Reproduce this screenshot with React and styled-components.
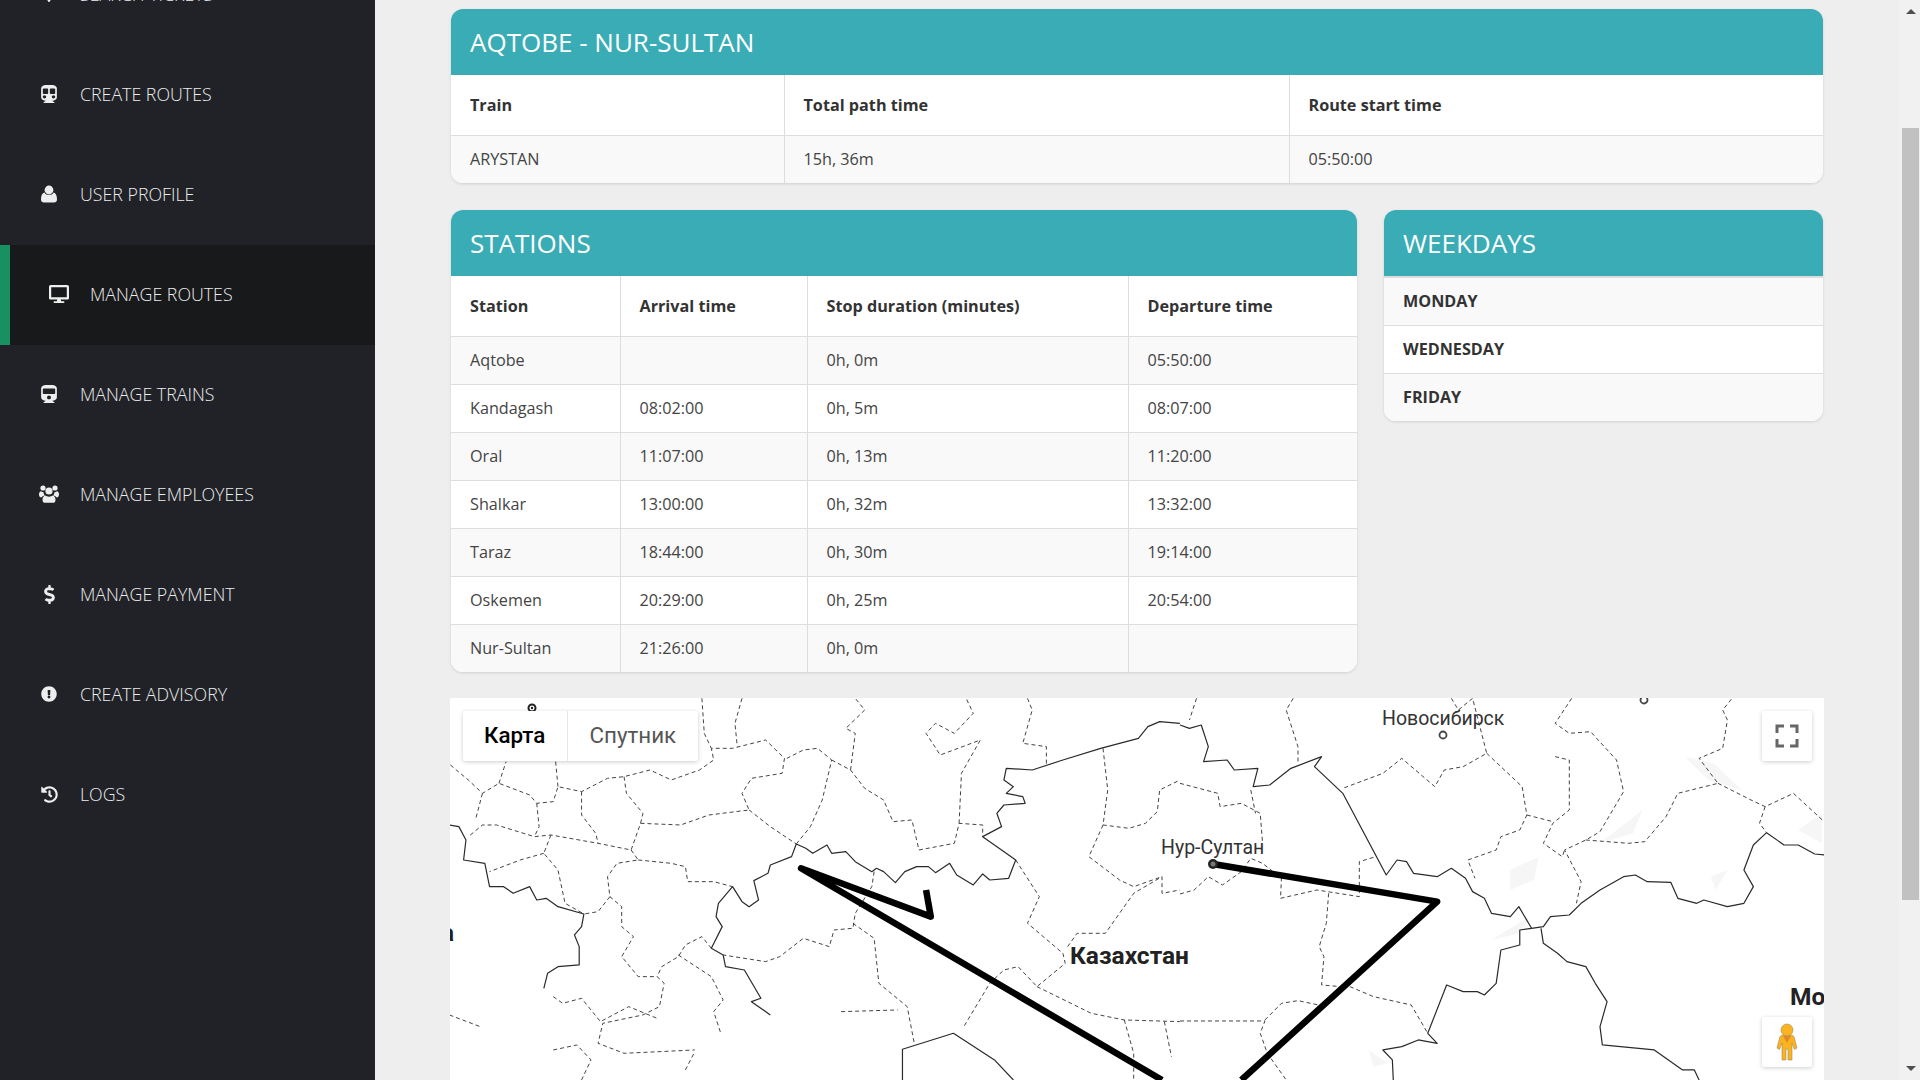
import styled, { createGlobalStyle } from 'styled-components';
import { FaMapMarkerAlt, FaSubway, FaDesktop, FaTrain, FaDollarSign, FaExclamationCircle, FaHistory } from 'react-icons/fa';

const GlobalStyle = createGlobalStyle`
    html, body {
        margin: 0;
        height: 100%;
        overflow: hidden;
    }
    body {
        font-family: "Open Sans", "Liberation Sans", sans-serif;
        background: #eeeeee;
    }
`;

// silhouettes drawn by hand, the packaged ones are too different
const UserIcon = () => (
    <svg width="16" height="18" viewBox="0 0 16 18" fill="currentColor">
        <circle cx="8" cy="5" r="4.4" />
        <path d="M3.4 7.6C4.6 9.4 6 10 8 10s3.4-.6 4.6-2.4C14.8 8.3 16 10.6 16 14.4c0 2-1.2 3-3 3H3c-1.8 0-3-1-3-3 0-3.8 1.200-6.100 3.400-6.800z" />
    </svg>
);

const UsersIcon = () => (
    <svg width="20" height="18" viewBox="0 0 20 18" fill="currentColor">
        <circle cx="4" cy="3" r="2.600" />
        <circle cx="16" cy="3" r="2.600" />
        <circle cx="10" cy="6" r="3.600" />
        <path d="M0 9.500C0 7.600.8 6.600 2 6.300c.8.700 1.600 1 2.600 1 0 1.200.5 2.300 1.300 3.100C4 10.600 2.800 11.600 2.300 12.500 1 12.500 0 11.500 0 9.500zM20 9.500c0-1.900-.8-2.900-2-3.200-.8.700-1.600 1-2.600 1 0 1.200-.5 2.300-1.300 3.100 1.900.2 3.100 1.200 3.600 2.100 1.300 0 2.300-1 2.300-3z" />
        <path d="M6.200 10.600C7.200 11.300 8.500 11.700 10 11.700s2.800-.4 3.800-1.100c1.700.4 2.700 2 2.700 4.300 0 1.900-1.100 2.900-2.700 2.900H6.200c-1.600 0-2.700-1-2.700-2.900 0-2.300 1-3.900 2.700-4.300z" />
    </svg>
);

const menu = [
    { label: 'SEARCH TICKETS', icon: <FaMapMarkerAlt size={16} /> },
    { label: 'CREATE ROUTES', icon: <FaSubway size={18} /> },
    { label: 'USER PROFILE', icon: <UserIcon /> },
    { label: 'MANAGE ROUTES', icon: <FaDesktop size={20} />, active: true },
    { label: 'MANAGE TRAINS', icon: <FaTrain size={18} /> },
    { label: 'MANAGE EMPLOYEES', icon: <UsersIcon /> },
    { label: 'MANAGE PAYMENT', icon: <FaDollarSign size={19} /> },
    { label: 'CREATE ADVISORY', icon: <FaExclamationCircle size={16} /> },
    { label: 'LOGS', icon: <FaHistory size={17} /> },
];

const stations = [
    ['Aqtobe', '', '0h, 0m', '05:50:00'],
    ['Kandagash', '08:02:00', '0h, 5m', '08:07:00'],
    ['Oral', '11:07:00', '0h, 13m', '11:20:00'],
    ['Shalkar', '13:00:00', '0h, 32m', '13:32:00'],
    ['Taraz', '18:44:00', '0h, 30m', '19:14:00'],
    ['Oskemen', '20:29:00', '0h, 25m', '20:54:00'],
    ['Nur-Sultan', '21:26:00', '0h, 0m', ''],
];

const weekdays = ['MONDAY', 'WEDNESDAY', 'FRIDAY'];

// map lines, in the coordinates of the two traced halves of the map
const leftSolid = [
    '20,405 40,410 55,450 50,510 95,520 105,590 135,590 155,610 190,590 205,630 225,625 250,650 305,672 300,710 285,735 295,770 295,825 250,830 228,850 220,895',
    '755,462 745,500 700,525 695,550 665,572 675,630 655,650 640,635 620,590 590,640 585,680 598,710 575,775 600,795 605,830 645,840 680,925 660,935 700,975',
    '755,462 775,475 790,490 820,465 830,490 860,485 880,515 915,545 925,535 940,545 965,578 985,545 1010,530 1035,530 1050,548 1080,520 1095,555 1130,585 1150,552 1165,570 1205,565 1220,510 1190,480 1150,440 1190,410 1180,370 1195,345 1240,340 1235,320 1200,310 1215,290 1195,270 1200,235 1255,240 1320,210 1400,175 1480,145 1500,110 1525,95 1568,100',
    '980,1170 980,1078 1088,1030 1175,1110 1215,1170',
];

const rightSolid = [
    '0,105 20,115 45,105 60,170 50,215 100,210 115,240 165,235 155,290 190,285 235,235 300,200 285,230 345,310 437,555 460,510 480,515 495,550 545,560 575,535 605,565 620,605 645,625 660,670 700,680 718,650 745,715 770,710 785,680 825,675 850,640 890,600 940,560 965,555 990,575 1040,577 1055,625 1095,640 1110,630 1160,650 1195,640 1215,590 1195,540 1215,465 1243,428 1280,465 1310,465 1345,492 1365,495',
    '745,715 720,720 720,765 680,780 670,880 645,915 630,905 600,905 565,885 525,1030 545,1060 505,1050 470,1070 430,1080 450,1110 452,1170',
    '765,715 770,760 800,790 820,815 860,830 880,880 905,935 890,1010 895,1065 1005,1080 1065,1140 1090,1140 1100,1170',
];

const leftDashed = [
    '22,225 60,270 90,310 125,280 190,315 205,340 240,335 250,290 300,305 355,265 390,260 445,240 490,270 550,240 580,210 575,175 620,175 690,150 730,205 725,250 660,265 640,310 655,360 570,375 510,405 425,400 405,480 335,460 235,435 200,440 120,405 90,405 60,440',
    '90,310 75,390',
    '125,280 140,215',
    '245,215 250,290',
    '300,305 300,375 330,430 335,460',
    '205,340 210,410 200,440',
    '390,260 395,310 430,370 425,400',
    '405,480 420,510 375,520 355,560 360,620 385,650 385,710 410,740 385,800 420,860 460,860 475,880 465,950 430,975 345,1000 335,1060 390,1090 540,1080',
    '420,510 490,520 520,530 525,575 580,575 620,590',
    '235,435 220,490 250,540 265,640 305,672',
    '220,490 170,510 105,545',
    '360,620 335,665 305,672',
    '655,360 700,410 755,462',
    '755,462 785,410 810,330 830,210 800,175 770,180 735,205',
    '830,210 870,240 900,295 940,330 960,395 1000,390 1015,480 1090,460 1100,400 1150,405 1150,440',
    '870,240 880,130 860,115 900,60 880,25',
    '1100,400 1105,250 1145,150 1060,195 1030,130 1050,100 1090,130 1130,70 1115,25',
    '1245,25 1255,60 1235,160 1285,170 1285,230',
    '640,25 625,100 630,170',
    '555,25 560,130 575,175',
    '920,545 915,590 880,670 875,715 835,720 825,770 770,745 720,800 690,815 600,795',
    '875,700 920,745 930,880 990,950 1005,1060',
    '850,965 970,960',
    '575,775 555,740 520,765 505,800 470,830 460,860',
    '505,795 575,860 600,930 580,965 595,1030',
    '1220,510 1270,620 1245,700 1320,790 1325,820 1265,890 1225,830 1195,840 1165,880 1110,1010',
    '1265,890 1380,970 1450,990 1568,995',
    '1330,770 1350,730 1410,730 1470,610 1530,560 1530,610 1568,600',
    '1405,175 1415,300 1405,405 1460,415 1495,400 1520,365 1525,300 1568,270',
    '1405,405 1375,500 1440,570 1470,590 1530,560',
    '240,920 260,940 300,925 340,995 400,950 460,985',
    '20,975 85,1010',
    '240,1080 290,1065 320,1110 300,1170',
    '520,1140 540,1085',
    '1450,990 1470,1090 1470,1170',
    '1535,995 1550,1100',
];

const rightDashed = [
    '35,25 20,90',
    '240,25 225,60 250,170 250,215',
    '0,280 80,310 85,350 130,340 170,370 175,460',
    '150,300 160,370',
    '575,25 590,60 620,25 650,190 600,230 560,240 540,290 470,205 430,250 345,295',
    '650,190 725,290 735,375 720,420 680,440 670,480 610,510 625,565',
    '830,25 795,100 825,130 870,125 925,210 940,305 890,425 860,450 815,480 850,575 840,640',
    '795,200 825,210 825,360 790,400 770,460 810,500 815,480',
    '735,375 790,395',
    '860,450 950,460 985,455 1030,380 1055,310 1140,280 1100,205 1150,175 1160,90 1150,60 1170,25',
    '1140,280 1210,330 1240,350 1300,310 1365,395',
    '1240,350 1228,400 1243,428',
    '0,612 30,600 60,560 90,585 130,545 150,505 175,520 215,565 213,625 290,600 380,620 380,515 415,500',
    '315,610 310,700 295,770 305,800 300,885 340,890',
    '360,890 410,920 490,945 525,1030',
    '0,993 180,993 170,1030 185,1090 225,1170',
    '180,990 215,940 250,932 310,950',
];

const rightTerrain = [
    '700,540 760,500 750,570 700,600',
    '890,460 980,360 960,430',
    '1070,200 1130,220 1190,300 1120,270',
    '660,750 740,680 720,730',
    '1310,420 1360,370 1360,460',
    '1125,560 1160,540 1135,600',
    '400,1080 440,1120 410,1130',
];

export default function App() {
    return (
        <Page>
            <GlobalStyle />
            <Sidebar>
                <Nav>
                    {menu.map((item) => (
                        <NavItem key={item.label} $active={item.active}>
                            <NavIcon>{item.icon}</NavIcon>
                            {item.label}
                        </NavItem>
                    ))}
                </Nav>
            </Sidebar>

            <Main>
                <Card>
                    <CardTitle>AQTOBE - NUR-SULTAN</CardTitle>
                    <Table>
                        <colgroup>
                            <col width="333" />
                            <col width="505" />
                            <col />
                        </colgroup>
                        <thead>
                            <tr>
                                <Th>Train</Th>
                                <Th>Total path time</Th>
                                <Th>Route start time</Th>
                            </tr>
                        </thead>
                        <tbody>
                            <Row>
                                <Td>ARYSTAN</Td>
                                <Td>15h, 36m</Td>
                                <Td>05:50:00</Td>
                            </Row>
                        </tbody>
                    </Table>
                </Card>

                <Columns>
                    <StationsCard>
                        <CardTitle>STATIONS</CardTitle>
                        <Table>
                            <colgroup>
                                <col width="169" />
                                <col width="187" />
                                <col width="321" />
                                <col />
                            </colgroup>
                            <thead>
                                <tr>
                                    <Th>Station</Th>
                                    <Th>Arrival time</Th>
                                    <Th>Stop duration (minutes)</Th>
                                    <Th>Departure time</Th>
                                </tr>
                            </thead>
                            <tbody>
                                {stations.map((station) => (
                                    <Row key={station[0]}>
                                        {station.map((value, i) => <Td key={i}>{value}</Td>)}
                                    </Row>
                                ))}
                            </tbody>
                        </Table>
                    </StationsCard>

                    <WeekdaysCard>
                        <CardTitle>WEEKDAYS</CardTitle>
                        <DayList>
                            <tbody>
                                {weekdays.map((day) => (
                                    <Row key={day}>
                                        <DayCell>{day}</DayCell>
                                    </Row>
                                ))}
                            </tbody>
                        </DayList>
                    </WeekdaysCard>
                </Columns>

                <MapBox>
                    <MapDrawing viewBox="0 0 1374 382">
                        <g transform="translate(730 -8) scale(0.4719 0.3333)">
                            {rightTerrain.map((p) => <polygon key={p} points={p} fill="#f6f6f6" />)}
                        </g>
                        <g transform="translate(-10 -8) scale(0.4719 0.3333)">
                            {leftDashed.map((p) => <DashedLine key={p} points={p} />)}
                            {leftSolid.map((p) => <SolidLine key={p} points={p} />)}
                            <RouteLine points="1030,600 1040,680 765,535 1530,1170" />
                        </g>
                        <g transform="translate(730 -8) scale(0.4719 0.3333)">
                            {rightDashed.map((p) => <DashedLine key={p} points={p} />)}
                            {rightSolid.map((p) => <SolidLine key={p} points={p} />)}
                            <RouteLine points="70,522 545,635 130,1170" />
                        </g>
                        <CityRing cx="993" cy="37" r="3.500" />
                        <CityRing cx="1194" cy="2" r="3.500" />
                        <circle cx="82" cy="10" r="3.500" fill="none" stroke="#222" strokeWidth="2" />
                        <circle cx="82" cy="10" r="1.200" fill="#222" />
                        <circle cx="763" cy="166" r="5" fill="#222" />
                        <circle cx="763" cy="166" r="2.500" fill="#777" />
                        <MapLabel x="932" y="27">Новосибирск</MapLabel>
                        <MapLabel x="711" y="156">Нур-Султан</MapLabel>
                        <CountryLabel x="620" y="266">Казахстан</CountryLabel>
                        <CountryLabel x="1340" y="307">Мо</CountryLabel>
                        <CountryLabel x="-9" y="243">а</CountryLabel>
                    </MapDrawing>

                    <MapTypes>
                        <MapType $selected>Карта</MapType>
                        <MapType>Спутник</MapType>
                    </MapTypes>
                    <FullscreenButton>
                        <svg width="24" height="24" viewBox="0 0 24 24" fill="none" stroke="#666" strokeWidth="3">
                            <path d="M2 9V2h7M15 2h7v7M22 15v7h-7M9 22H2v-7" />
                        </svg>
                    </FullscreenButton>
                    <PegmanButton>
                        <svg width="24" height="38" viewBox="0 0 24 38" stroke="#9a8a60" strokeWidth="0.6">
                            <path fill="#fbb320" d="M8 12h8c2 0 3 1 3.400 3l2.600 10-2.500 1.500L17 20v17h-4V26h-2v11H7V20l-2.500 6.500L2 25l2.600-10C5 13 6 12 8 12z" />
                            <circle cx="12" cy="7" r="6" fill="#fbb320" />
                            <path fill="#e08a2c" stroke="none" d="M8 13h8l-4 7z" />
                        </svg>
                    </PegmanButton>
                </MapBox>
            </Main>

            <Scrollbar>
                <ArrowUp />
                <Thumb />
                <ArrowDown />
            </Scrollbar>
        </Page>
    );
}

const Page = styled.div`
    display: flex;
    height: 100vh;
    overflow: hidden;
`;

const Sidebar = styled.aside`
    flex: 0 0 375px;
    background: #202227;
    overflow: hidden;
`;

const Nav = styled.nav`
    display: flex;
    flex-direction: column;
    margin-top: -55px;
`;

const NavItem = styled.div`
    display: flex;
    align-items: center;
    height: 100px;
    padding: 0 0 2px 37px;
    box-sizing: border-box;
    color: #eceded;
    font-size: 17.800px;
    font-weight: 300;
    ${(props) => props.$active && `
        background: #18191b;
        border-left: 10px solid #16915f;
    `}
`;

const NavIcon = styled.span`
    display: flex;
    justify-content: center;
    align-items: center;
    width: 24px;
    margin-right: 19px;
    color: #eeeeee;
`;

const Main = styled.main`
    flex: 1;
    min-width: 0;
    padding: 9px 76px 0;
    display: flex;
    flex-direction: column;
`;

const Card = styled.section`
    background: #ffffff;
    border-radius: 12px;
    overflow: hidden;
    box-shadow: 0 1px 3px rgba(0, 0, 0, 0.13);
    flex: none;
`;

const StationsCard = styled(Card)`
    flex: 0 0 906px;
`;

const WeekdaysCard = styled(Card)`
    flex: 0 0 439px;
    align-self: flex-start;
`;

const CardTitle = styled.h2`
    margin: 0;
    height: 66px;
    box-sizing: border-box;
    padding: 0 19px;
    display: flex;
    align-items: center;
    background: #3aacb5;
    color: #ffffff;
    font-size: 26px;
    font-weight: 400;
`;

const Columns = styled.div`
    display: flex;
    gap: 27px;
    margin: 27px 0 26px;
    flex: none;
`;

const Table = styled.table`
    width: 100%;
    border-collapse: collapse;
    table-layout: fixed;
    font-size: 16.200px;
    color: #444444;
`;

const DayList = styled(Table)`
    border-top: 2px solid #dddddd;
`;

const Th = styled.th`
    height: 60px;
    box-sizing: border-box;
    padding: 0 19px;
    text-align: left;
    font-weight: 700;
    color: #333333;
    border-bottom: 1px solid #dddddd;
    border-left: 1px solid #dddddd;
    &:first-child { border-left: 0; }
`;

const Row = styled.tr`
    height: 48px;
    background: #ffffff;
    &:nth-child(odd) { background: #f9f9f9; }
`;

const Td = styled.td`
    box-sizing: border-box;
    padding: 0 19px;
    border-top: 1px solid #dddddd;
    border-left: 1px solid #dddddd;
    &:first-child { border-left: 0; }
    tr:first-child > & { border-top: 0; }
`;

const DayCell = styled(Td)`
    font-weight: 700;
    color: #333333;
`;

const MapBox = styled.div`
    position: relative;
    height: 382px;
    margin: 0 -1px;
    flex: none;
    background: #ffffff;
    overflow: hidden;
`;

const MapDrawing = styled.svg`
    display: block;
    width: 100%;
    height: 100%;
`;

const SolidLine = styled.polyline`
    fill: none;
    stroke: #2a2a2a;
    stroke-width: 1.200;
    stroke-linejoin: round;
    vector-effect: non-scaling-stroke;
`;

const DashedLine = styled(SolidLine)`
    stroke: #444444;
    stroke-width: 1;
    stroke-dasharray: 4 3;
`;

const RouteLine = styled(SolidLine)`
    stroke: #000000;
    stroke-width: 6.500;
`;

const CityRing = styled.circle`
    fill: #ffffff;
    stroke: #444444;
    stroke-width: 1.800;
`;

const MapLabel = styled.text`
    font-family: Roboto, "Liberation Sans", sans-serif;
    font-size: 19.500px;
    fill: #333333;
`;

const CountryLabel = styled(MapLabel)`
    font-size: 24.500px;
    font-weight: 700;
    fill: #222222;
`;

const MapTypes = styled.div`
    position: absolute;
    top: 13px;
    left: 13px;
    display: flex;
    background: #ffffff;
    border-radius: 2px;
    box-shadow: 0 1px 4px rgba(0, 0, 0, 0.2);
`;

const MapType = styled.div`
    height: 50px;
    padding: 0 22px 2px 21px;
    box-sizing: border-box;
    display: flex;
    align-items: center;
    font-family: Roboto, "Liberation Sans", sans-serif;
    font-size: 22.400px;
    color: ${(props) => (props.$selected ? '#000000' : '#565656')};
    font-weight: ${(props) => (props.$selected ? 500 : 400)};
    & + & { border-left: 1px solid #e6e6e6; }
`;

const MapControl = styled.div`
    position: absolute;
    right: 12px;
    width: 50px;
    height: 50px;
    display: flex;
    align-items: center;
    justify-content: center;
    background: #ffffff;
    border-radius: 2px;
    box-shadow: 0 1px 4px rgba(0, 0, 0, 0.2);
`;

const FullscreenButton = styled(MapControl)`
    top: 13px;
`;

const PegmanButton = styled(MapControl)`
    top: 319px;
`;

const Scrollbar = styled.div`
    flex: 0 0 21px;
    background: #f1f1f1;
    display: flex;
    flex-direction: column;
    align-items: center;
    padding: 9px 0 9px 2px;
    box-sizing: border-box;
`;

const ArrowUp = styled.div`
    width: 0;
    height: 0;
    border-left: 5px solid transparent;
    border-right: 5px solid transparent;
    border-bottom: 5px solid #505050;
`;

const ArrowDown = styled.div`
    width: 0;
    height: 0;
    margin-top: auto;
    border-left: 5px solid transparent;
    border-right: 5px solid transparent;
    border-top: 5px solid #505050;
`;

const Thumb = styled.div`
    width: 17px;
    height: 772px;
    margin-top: 114px;
    background: #c1c1c1;
`;
